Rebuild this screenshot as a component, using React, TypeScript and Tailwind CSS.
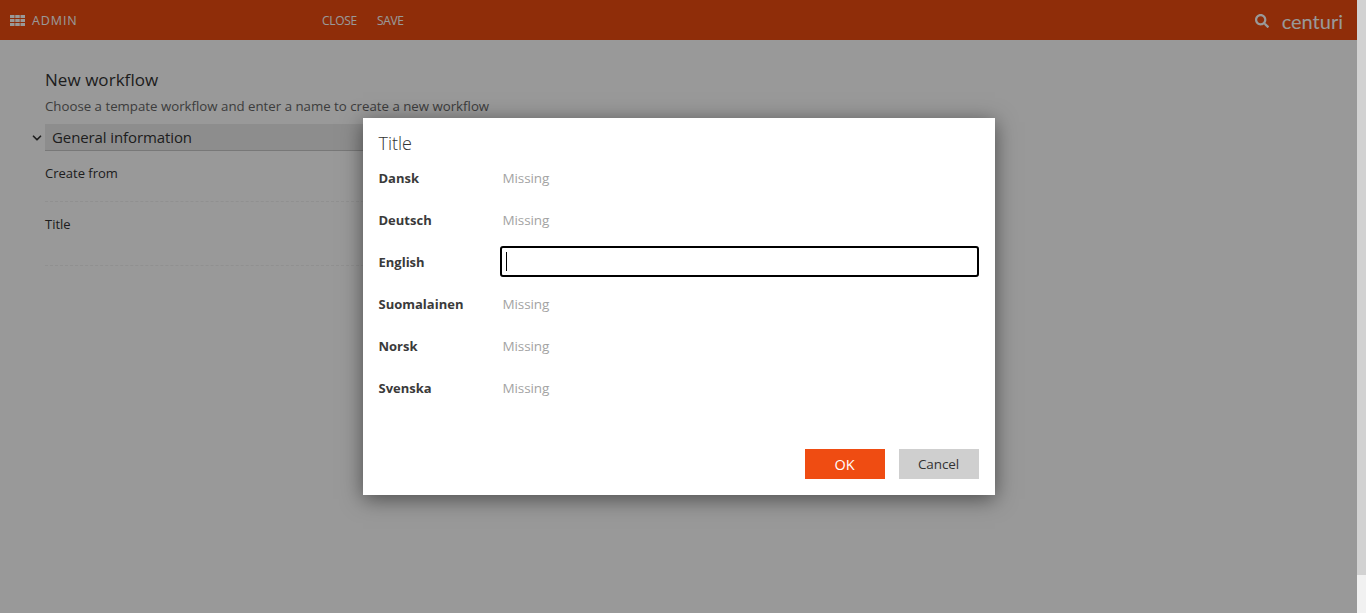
import { FaSearch } from "react-icons/fa";
import { ChevronDown } from "lucide-react";

const font = { fontFamily: '"Open Sans", "Noto Sans", sans-serif' };

function Row({ label, focused }: { label: string; focused?: boolean }) {
  return (
    <div className="flex h-[42px] items-center">
      <div className="w-[121px] text-[13px] font-bold leading-[18px] text-[#3a3a3a]">{label}</div>
      {focused ? (
        <div className="-mt-px flex h-[31px] w-[479px] items-center rounded-[3px] border-2 border-black pl-[4px]">
          <div className="h-[19px] w-px bg-black" />
        </div>
      ) : (
        <div className="pl-[3px] text-[13.5px] leading-[18px] tracking-[-0.1px] text-[#a3a3a3]">Missing</div>
      )}
    </div>
  );
}

export default function App() {
  return (
    <div className="flex h-[613px] w-[1366px] overflow-hidden bg-white" style={font}>
      <div className="relative w-[1357px]">
        <header className="flex h-10 items-center bg-[#ee4c10] pt-px text-white">
          <div className="flex w-[322px] items-center pl-[10px]">
            <svg width="15" height="11" viewBox="0 0 15 11" fill="currentColor" aria-hidden="true">
              {[0, 4, 8].map((y) =>
                [0, 5.25, 10.5].map((x) => <rect key={`${x}-${y}`} x={x} y={y} width="4.5" height="3" />)
              )}
            </svg>
            <span className="ml-[7px] mt-px text-[12.5px] tracking-[0.9px]">ADMIN</span>
          </div>
          <span className="text-[12px] tracking-[-0.3px]">CLOSE</span>
          <span className="ml-[20px] text-[12px] tracking-[-0.3px]">SAVE</span>
          <div className="ml-auto flex items-center pr-[14px]">
            <FaSearch className="h-[14px] w-[14px]" />
            <span className="ml-[13px] text-[20px] leading-none" style={{ fontFamily: '"Lato", sans-serif' }}>centuri</span>
          </div>
        </header>
        <main className="w-[640px] pl-[45px] pt-[28px] text-[#333]">
          <h1 className="text-[17px] leading-6 tracking-[0.05px]">New workflow</h1>
          <p className="mt-[5px] whitespace-nowrap text-[13.25px] leading-[18px] text-[#666]">Choose a tempate workflow and enter a name to create a new workflow</p>
          <div className="relative mt-[9px] flex h-[27px] items-center border-b border-[#c8c8c8] bg-[#ececec] pl-[7px] text-[15px] tracking-[-0.1px]">
            General information
            <ChevronDown className="absolute left-[-15px] top-[7px] h-[14px] w-[14px]" strokeWidth={3} />
          </div>
          <div className="h-[51px] border-b border-dashed border-[#f0f0f0] pt-[13px] text-[13px] leading-[18px]">Create from</div>
          <div className="h-[64px] border-b border-dashed border-[#f0f0f0] pt-[13px] text-[13px] leading-[18px]">Title</div>
        </main>
        <div className="absolute inset-0 flex justify-center bg-black/40">
          <div className="mt-[118px] flex h-[377px] w-[632px] flex-col bg-white px-[16px] shadow-[0_4px_20px_rgba(0,0,0,0.5)]">
            <h2 className="pt-[13px] text-[18px] font-light leading-6 text-[#333]">Title</h2>
            <div className="mt-[2px]">
              <Row label="Dansk" />
              <Row label="Deutsch" />
              <Row label="English" focused />
              <Row label="Suomalainen" />
              <Row label="Norsk" />
              <Row label="Svenska" />
            </div>
            <div className="mt-auto flex justify-end gap-[14px] pb-[16px]">
              <button className="h-[30px] w-[80px] bg-[#ef4c12] pt-px text-[14.5px] text-white">OK</button>
              <button className="h-[30px] w-[80px] bg-[#cfcfcf] pt-px text-[13.5px] tracking-[-0.1px] text-[#333]">Cancel</button>
            </div>
          </div>
        </div>
      </div>
      <div className="flex w-[9px] flex-col bg-[#f1f1f1]">
        <div className="h-[575px] bg-[#d2d2d2]" />
      </div>
    </div>
  );
}
